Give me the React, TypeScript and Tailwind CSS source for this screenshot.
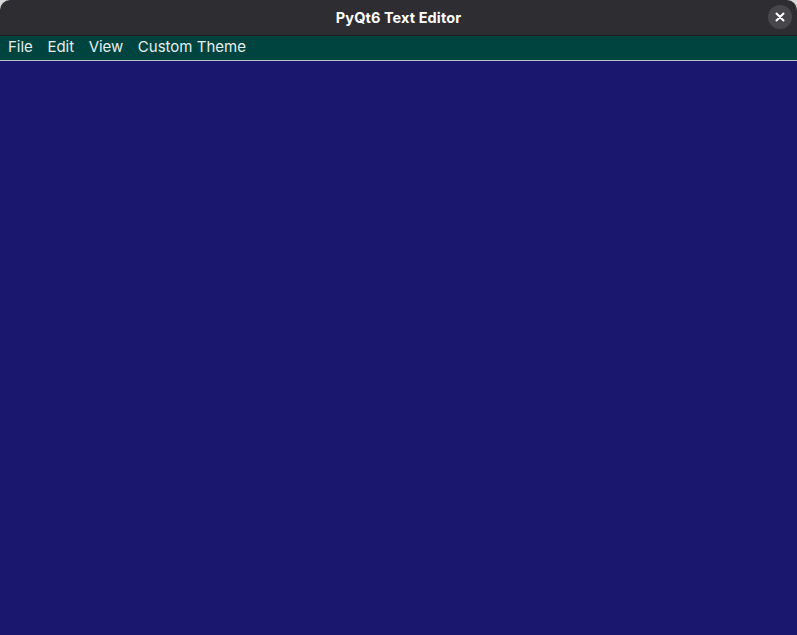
import React from "react";

export default function App() {
  return (
    <div className="w-[797px] h-[635px] bg-[#d8d8d8] overflow-hidden" style={{ fontFamily: '"Noto Sans", Inter, sans-serif' }}>
      <div className="w-full h-full flex flex-col rounded-t-[10px] overflow-hidden">
        <div className="h-[36px] shrink-0 bg-[#2e2e32] relative flex items-center justify-center border-b border-[#1c1c1f]">
          <span className="text-white text-[14.5px] font-bold tracking-[0.1px]" style={{ fontFamily: 'Inter, "Noto Sans", sans-serif' }}>PyQt6 Text Editor</span>
          <button className="absolute right-[5px] top-[5px] w-[24px] h-[24px] rounded-full bg-[#47474b] flex items-center justify-center">
            <svg width="10" height="10" viewBox="0 0 10 10">
              <path d="M1.5 1.5 L8.5 8.5 M8.5 1.5 L1.5 8.5" stroke="white" strokeWidth="2" strokeLinecap="round" />
            </svg>
          </button>
        </div>
        <div className="h-[25px] shrink-0 bg-[#004440] flex items-center pb-[2px] border-b border-[#b9c3cc] text-[#e6eeee] text-[15px] pl-[8px] gap-[14.5px]" style={{ fontFamily: 'Inter, "Noto Sans", sans-serif' }}>
          <span>File</span>
          <span>Edit</span>
          <span>View</span>
          <span>Custom Theme</span>
        </div>
        <div className="flex-1 bg-[#19186e]" />
      </div>
    </div>
  );
}
